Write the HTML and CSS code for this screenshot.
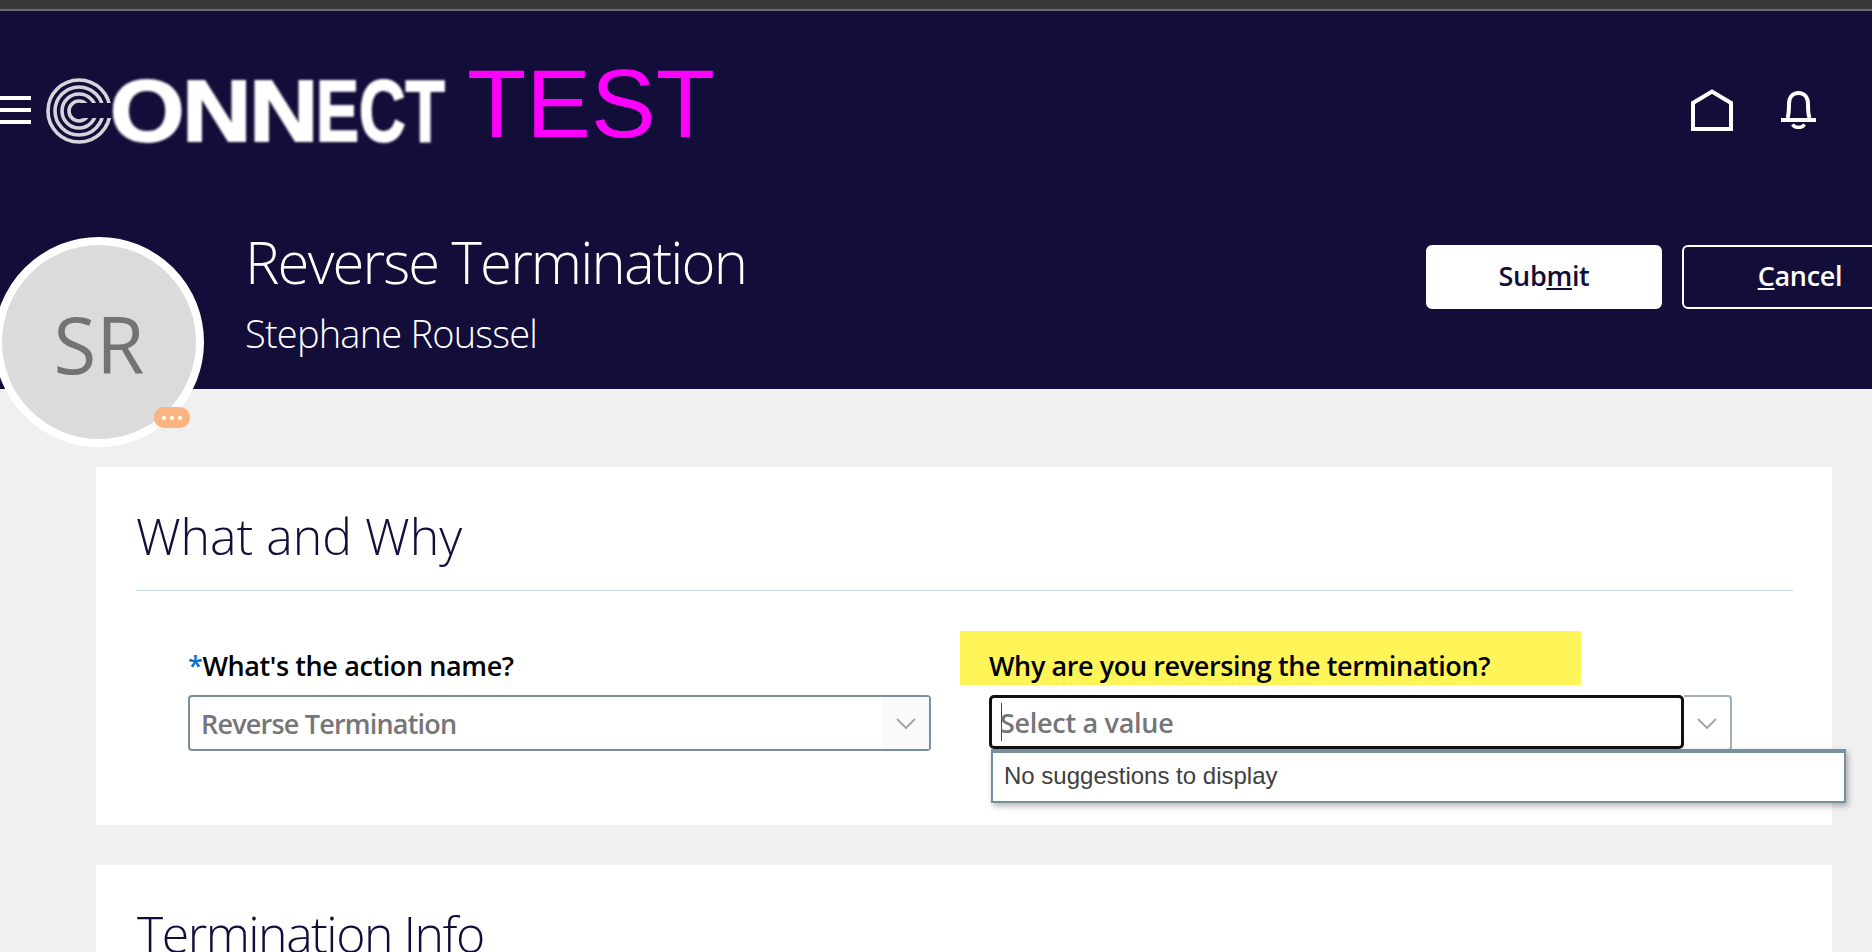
FILE: index.html
```html
<!DOCTYPE html>
<html lang="en">
<head>
<meta charset="utf-8">
<title>Reverse Termination</title>
<link rel="stylesheet" href="styles.css">
</head>
<body>
<div class="chrome-bar"></div>
<header class="header">
  <div class="nav">
    <svg class="menu-icon" width="31" height="28" viewBox="0 0 31 28"><path d="M0 2H31M0 14H31M0 26H31" stroke="#fff" stroke-width="4"/></svg>
    <div class="logo">
      <svg class="logo-mark" width="68" height="68" viewBox="0 0 68 68">
        <g fill="none" stroke="#d4d4da" stroke-width="3.6">
          <circle cx="33" cy="34" r="31"/><circle cx="33" cy="34" r="24"/><circle cx="33" cy="34" r="17"/><circle cx="33" cy="34" r="10"/>
        </g>
        <path d="M33 26H68V41H33Z" fill="#130d3a"/>
      </svg>
      <span class="logo-word"><span class="logo-wide">ONN</span><span class="logo-narrow">ECT</span></span>
    </div>
    <div class="env-tag">TEST</div>
    <div class="nav-icons">
      <svg width="42" height="42" viewBox="0 0 42 42"><path d="M2 40V14L21 2.500L40 14V40Z" fill="none" stroke="#fff" stroke-width="4"/></svg>
      <svg class="bell" width="35" height="38" viewBox="0 0 35 38"><path d="M6.500 27C8 23 8 19 8 13C8 6 12 2 17.500 2C23 2 27 6 27 13C27 19 27 23 28.500 27" fill="none" stroke="#fff" stroke-width="4"/><path d="M0 29H35" stroke="#fff" stroke-width="4"/><path d="M11.500 33.500C14 37.500 21 37.500 23.500 33.500" fill="none" stroke="#fff" stroke-width="3.400"/></svg>
    </div>
  </div>
  <div class="title-row">
    <div class="titles">
      <h1 class="title">Reverse Termination</h1>
      <div class="subtitle">Stephane Roussel</div>
    </div>
    <div class="actions">
      <button class="btn btn-primary">Sub<u>m</u>it</button>
      <button class="btn btn-outline"><u>C</u>ancel</button>
    </div>
  </div>
</header>

<div class="avatar">SR<span class="badge"><i></i><i></i><i></i></span></div>

<main class="content">
  <section class="card">
    <h2 class="card-title">What and Why</h2>
    <div class="form-grid">
      <div class="field">
        <div class="label-row"><label class="label"><span class="req">*</span>What's the action name?</label></div>
        <div class="select">
          <span class="select-value">Reverse Termination</span>
          <span class="select-arrow"><svg width="20" height="11" viewBox="0 0 20 11"><path d="M1 1L10 10L19 1" fill="none" stroke="#a6a6a6" stroke-width="2"/></svg></span>
        </div>
      </div>
      <div class="field field-right">
        <div class="label-row highlight"><label class="label">Why are you reversing the termination?</label></div>
        <div class="combo">
          <div class="combo-input"><span class="caret"></span><span class="placeholder">Select a value</span></div>
          <span class="combo-arrow"><svg width="20" height="11" viewBox="0 0 20 11"><path d="M1 1L10 10L19 1" fill="none" stroke="#a6a6a6" stroke-width="2"/></svg></span>
          <div class="popup">No suggestions to display</div>
        </div>
      </div>
    </div>
  </section>
  <section class="card">
    <h2 class="card-title card-title-tight">Termination Info</h2>
  </section>
</main>
</body>
</html>
```
FILE: styles.css
```css
* { box-sizing: border-box; }
html, body { margin: 0; height: 952px; overflow: hidden; }
body { width: 1872px; background: #f0f0f0; font-family: "Open Sans", "Noto Sans", sans-serif; position: relative; }

.chrome-bar { height: 11px; background: #383838; border-bottom: 2px solid #6a6a6a; }

.header { height: 378px; background: #130d3a; color: #fff; }
.nav { height: 214px; display: flex; position: relative; }
.menu-icon { margin-top: 85px; flex: none; }
.logo { display: flex; margin: 66px 0 0 15px; height: 68px; width: 400px; flex: none; }
.logo-mark { flex: none; filter: blur(.7px); }
.logo-word { font-family: "Liberation Sans", sans-serif; font-weight: 700; font-size: 87px; line-height: 68px; margin-left: -4px; white-space: nowrap; -webkit-text-stroke: 2px #fff; filter: blur(1px); }
.logo-wide { display: inline-block; letter-spacing: -2px; transform: scaleX(1.1); transform-origin: left center; }
.logo-narrow { display: inline-block; margin-left: 19px; transform: scaleX(.74); transform-origin: left center; }
.env-tag { font-family: "Liberation Sans", sans-serif; font-size: 97px; line-height: 96px; color: #f0f; margin: 45px 0 0 21px; }
.nav-icons { position: absolute; left: 1691px; top: 78px; display: flex; gap: 48px; align-items: flex-start; }
.bell { margin-top: 2px; }

.title-row { display: flex; justify-content: space-between; padding-left: 245px; }
.title { margin: 7px 0 0; font-size: 58px; line-height: 60px; font-weight: 300; letter-spacing: -1.85px; }
.subtitle { font-size: 38px; line-height: 50px; font-weight: 300; margin-top: 16px; letter-spacing: -.8px; }
.actions { display: flex; gap: 20px; margin-top: 20px; margin-right: -46px; }
.btn { width: 236px; height: 64px; border-radius: 6px; font: 600 27px "Open Sans", sans-serif; letter-spacing: -.3px; border: 2px solid #fff; padding: 0 0 4px; cursor: pointer; }
.btn-primary { background: #fff; color: #130d3a; }
.btn-outline { background: transparent; color: #fff; }

.avatar { position: absolute; left: -6px; top: 237px; width: 210px; height: 210px; border-radius: 50%; border: 8px solid #fff; background: #dbdbdb; color: #737373; font-size: 78px; font-weight: 400; padding-top: 4px; display: flex; align-items: center; justify-content: center; }
.badge { position: absolute; left: 152px; top: 162px; width: 36px; height: 21px; border-radius: 10px; background: #f9b47f; display: flex; align-items: center; justify-content: center; gap: 4px; }
.badge i { width: 4px; height: 4px; background: #fff; border-radius: 50%; }

.content { padding: 78px 40px 0 96px; height: 563px; overflow: hidden; display: flex; flex-direction: column; gap: 40px; }
.card { background: #fff; height: 358px; padding: 0 39px 0 40px; flex: none; }
.card-title { margin: 0; padding-top: 34px; height: 124px; font-size: 50px; line-height: 70px; font-weight: 300; color: #130d3a; border-bottom: 1px solid #c5d6e6; }
.card-title-tight { letter-spacing: -1.5px; padding-left: 1px; }
.form-grid { display: flex; padding-left: 12px; }
.field { width: 812px; flex: none; }
.field-right { width: 760px; }
.label-row { height: 54px; margin-top: 40px; display: flex; align-items: flex-end; padding: 0 0 0 40px; }
.label { font-size: 27px; font-weight: 600; letter-spacing: -.4px; color: #000; line-height: 36px; white-space: nowrap; padding-bottom: 1px; }
.req { color: #0572ce; }
.highlight { width: 621px; background: #fff559; padding-left: 29px; }
.select { margin: 10px 0 0 40px; width: 743px; height: 56px; border: 2px solid #7a8f9e; border-radius: 4px; display: flex; align-items: center; justify-content: space-between; padding-left: 11px; background: #fff; }
.select-value { font-size: 27px; font-weight: 600; letter-spacing: -.8px; color: #75757a; }
.select-arrow { width: 47px; height: 100%; background: #fafafa; display: flex; align-items: center; justify-content: center; }
.combo { margin: 10px 0 0 29px; display: flex; position: relative; width: 743px; }
.combo-input { width: 695px; height: 54px; border: 3px solid #111; border-radius: 5px; display: flex; align-items: center; padding-left: 9px; position: relative; background: #fff; }
.caret { width: 1px; height: 38px; background: #444; flex: none; margin-right: -2px; }
.placeholder { font-size: 27px; font-weight: 600; letter-spacing: -.3px; color: #75757a; }
.combo-arrow { width: 48px; height: 56px; border: 2px solid #9fb0bb; border-left: 0; border-radius: 0 4px 4px 0; display: flex; align-items: center; justify-content: center; }
.popup { position: absolute; left: 2px; top: 54px; width: 855px; height: 54px; background: #fff; border: 2px solid #76909f; border-top-width: 4px; box-shadow: 2px 3px 6px rgba(0,0,0,.3); font: 24px "Liberation Sans", sans-serif; color: #404040; line-height: 46px; padding-left: 11px; }
```
